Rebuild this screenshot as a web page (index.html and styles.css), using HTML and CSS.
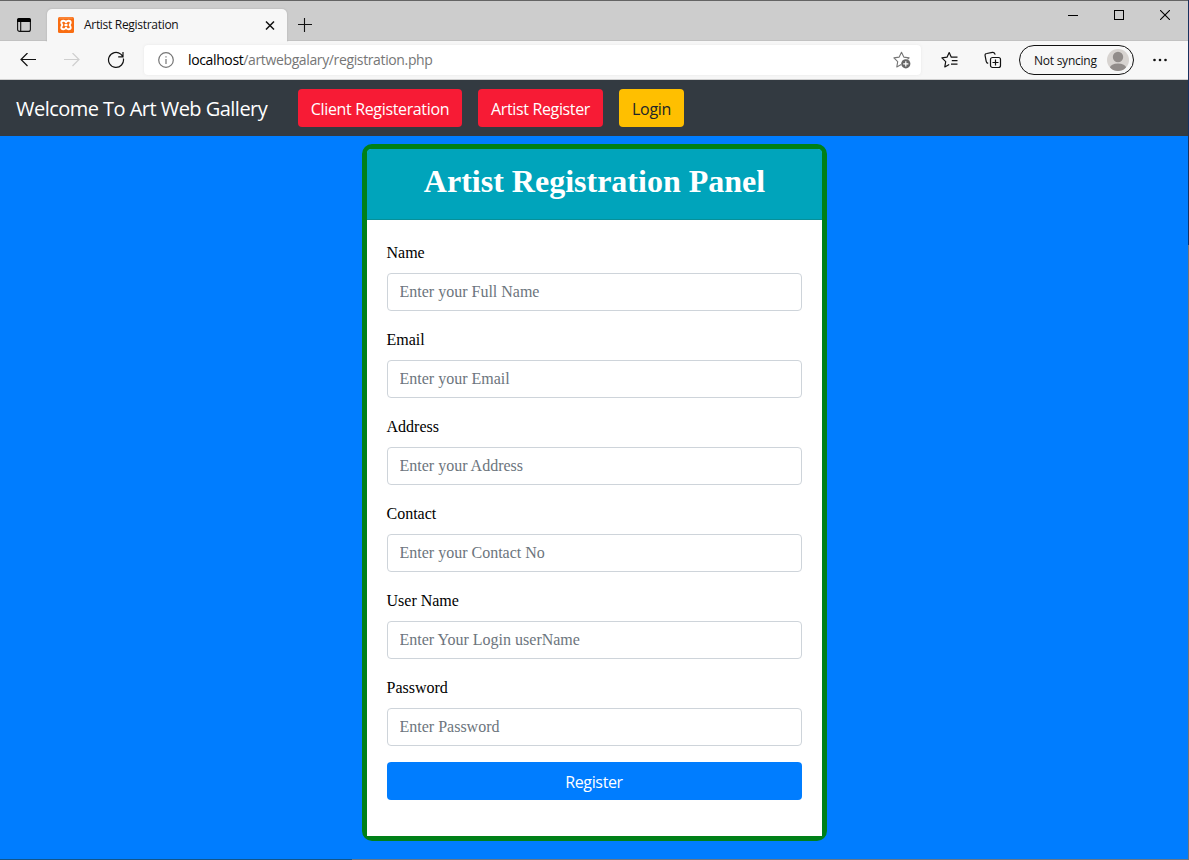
FILE: index.html
```html
<!DOCTYPE html>
<html lang="en">
<head>
<meta charset="utf-8">
<title>Artist Registration</title>
<link rel="stylesheet" href="styles.css">
</head>
<body>
<div class="screen">
<div class="window">
  <div class="tabstrip">
    <svg class="tab-actions" width="16" height="16" viewBox="0 0 16 16"><rect x="1.6" y="1.6" width="12.8" height="12.8" rx="2" fill="none" stroke="#111" stroke-width="1.1"/><path d="M1 5V3a2 2 0 0 1 2-2h10a2 2 0 0 1 2 2v2z" fill="#000"/><path d="M4.7 5v9.500" stroke="#111" stroke-width="1.1"/></svg>
    <div class="tab">
      <svg width="16" height="16" viewBox="0 0 16 16"><rect width="16" height="16" rx="1.500" fill="#f96d12"/><path d="M1.500 1h13" stroke="#fba66b" stroke-width=".8"/><path d="M8 5.500C7 3 3.300 3.300 3.300 5.500C3.300 7 4.300 7.300 4.300 8C4.300 8.700 3.300 9 3.300 10.500C3.300 12.700 7 13 8 10.500C9 13 12.700 12.700 12.700 10.500C12.700 9 11.700 8.700 11.700 8C11.700 7.300 12.700 7 12.700 5.500C12.700 3.300 9 3 8 5.500zM6.500 8h3" fill="none" stroke="#fff" stroke-width="1.900" stroke-linejoin="round"/></svg>
      <span class="tab-title">Artist Registration</span>
      <svg class="tab-close" width="10" height="10" viewBox="0 0 10 10"><path d="M1 1.500l8 8M9 1.500L1 9.500" stroke="#111" stroke-width="1.500"/></svg>
    </div>
    <svg class="new-tab" width="14" height="14" viewBox="0 0 14 14"><path d="M0 6.500h14M6.500 0v14" stroke="#111" stroke-width="1.100"/></svg>
    <div class="controls">
      <svg width="10" height="10" viewBox="0 0 10 10"><path d="M0 5.500h10" stroke="#000"/></svg>
      <svg width="10" height="10" viewBox="0 0 10 10"><rect x=".5" y=".5" width="9" height="9" fill="none" stroke="#000"/></svg>
      <svg width="10" height="10" viewBox="0 0 10 10"><path d="M0 0l10 10M10 0L0 10" stroke="#000" stroke-width="1.100"/></svg>
    </div>
  </div>
  <div class="toolbar">
    <svg class="back" width="16" height="14" viewBox="0 0 16 14"><path d="M16 6.500H1M7.500 0L1 6.500 7.500 13" fill="none" stroke="#111" stroke-width="1.200"/></svg>
    <svg class="forward" width="16" height="14" viewBox="0 0 16 14"><path d="M0 6.500h15M8.500 0L15 6.500 8.500 13" fill="none" stroke="#cfcfcf" stroke-width="1.200"/></svg>
    <svg class="reload" width="18" height="18" viewBox="0 0 18 18"><path d="M16.400 7.500A7.500 7.500 0 1 1 13.800 3.100L16 5.500M16 1v4.800h-4.800" fill="none" stroke="#111" stroke-width="1.200"/></svg>
    <div class="address">
      <svg width="16" height="16" viewBox="0 0 16 16"><circle cx="8" cy="8" r="7.300" fill="none" stroke="#767676" stroke-width="1.200"/><path d="M8 7v5M8 4.200v1.400" stroke="#767676" stroke-width="1.200"/></svg>
      <span class="url"><b>localhost</b>/artwebgalary/registration.php</span>
      <svg class="fav-add" width="18" height="18" viewBox="0 0 18 18"><path d="M8.200 13.500L3.800 15.900l.9-5.300L.9 6.900l5.300-.8L8.500 1.300l2.300 4.800 5.300.8-1.500 1.500" fill="none" stroke="#767676" stroke-width="1.100" stroke-linejoin="round"/><circle cx="12.800" cy="12.800" r="4.600" fill="#666"/><path d="M10.200 12.800h5.200M12.800 10.200v5.200" stroke="#fff" stroke-width="1.200"/></svg>
    </div>
    <svg class="favorites" width="18" height="18" viewBox="0 0 18 18"><path d="M16.500 6.200h-6.200L8.200 1.500 6 6.200.9 6.900l3.800 3.700-.9 5.300 4.400-2.500M10.800 9.600h5.700M10 13.200h6.500" fill="none" stroke="#111" stroke-width="1.200" stroke-linejoin="round"/></svg>
    <svg class="collections" width="18" height="18" viewBox="0 0 18 18"><path d="M4.200 12.400C2.800 12.100 2.400 11.400 2.200 10.300L1.100 4.700C.8 3.300 1.500 2.700 2.800 2.500L8.400 1.400c1.500-.3 2.300.2 2.800 2.300" fill="none" stroke="#111" stroke-width="1.200"/><rect x="6.500" y="6.500" width="10" height="10" rx="2" fill="#f7f7f7" stroke="#111" stroke-width="1.200"/><path d="M8.500 11.500h6M11.500 8.500v6" stroke="#111" stroke-width="1.200"/></svg>
    <div class="profile">
      <span>Not syncing</span>
      <svg width="22" height="22" viewBox="0 0 22 22"><defs><clipPath id="avatar"><circle cx="11" cy="11" r="11"/></clipPath></defs><g clip-path="url(#avatar)"><path d="M0 0h22v22H0z" fill="#d7d3d0"/><circle cx="11" cy="8" r="5.200" fill="#918c8a"/><ellipse cx="11" cy="18.500" rx="8" ry="4" fill="#918c8a"/></g></svg>
    </div>
    <svg class="menu" width="14" height="4" viewBox="0 0 14 4"><g fill="#111"><circle cx="1.500" cy="2" r="1.300"/><circle cx="7" cy="2" r="1.300"/><circle cx="12.500" cy="2" r="1.300"/></g></svg>
  </div>
  <nav class="navbar">
    <a class="brand">Welcome To Art Web Gallery</a>
    <a class="btn btn-danger client">Client Registeration</a>
    <a class="btn btn-danger artist">Artist Register</a>
    <a class="btn btn-warning login">Login</a>
  </nav>
  <main class="page">
    <form class="card">
      <div class="card-header"><h2>Artist Registration Panel</h2></div>
      <div class="card-body">
        <div class="group"><label>Name</label><input placeholder="Enter your Full Name"></div>
        <div class="group"><label>Email</label><input placeholder="Enter your Email"></div>
        <div class="group"><label>Address</label><input placeholder="Enter your Address"></div>
        <div class="group"><label>Contact</label><input placeholder="Enter your Contact No"></div>
        <div class="group"><label>User Name</label><input placeholder="Enter Your Login userName"></div>
        <div class="group"><label>Password</label><input type="password" placeholder="Enter Password"></div>
        <button type="button" class="btn btn-primary">Register</button>
      </div>
    </form>
  </main>
  <div class="bottom-edge"></div>
</div>
<div class="edge"></div>
</div>
</body>
</html>
```
FILE: styles.css
```css
* { box-sizing: border-box; }
body { margin: 0; font-family: "Open Sans", "Noto Sans", sans-serif; overflow: hidden; }
svg { display: block; flex: none; }
.screen { display: flex; width: 1189px; height: 860px; }
.window { display: flex; flex-direction: column; flex: 1; min-width: 0; }
.edge { width: 1px; background: linear-gradient(#17315f 245px, #77736f 245px); }
.bottom-edge { height: 1px; background: linear-gradient(90deg, #12558a 352px, #6b7785 352px); }

.tabstrip { display: flex; height: 41px; background: #cdcdcd; border-top: 1px solid #646464; box-shadow: inset 0 -1px #c2c2c2; }
.tab-actions { margin: 16px 0 0 16px; }
.tab { display: flex; align-items: center; width: 240px; height: 33px; margin: 8px 0 0 15px; padding: 0 12px 2px 11px; background: #f7f7f7; border-radius: 5px 5px 0 0; box-shadow: 0 0 2px #aaa; clip-path: inset(-3px -3px 0 -3px); }
.tab-title { flex: 1; margin-left: 10px; font-size: 12px; line-height: 16px; letter-spacing: -0.3px; white-space: nowrap; color: #111; }
.new-tab { margin: 17px 0 0 11px; }
.controls { display: flex; gap: 36px; margin: 9px 18px 0 auto; }

.toolbar { display: flex; align-items: center; height: 39px; background: #f7f7f7; border-bottom: 1px solid #cfcfcf; }
.back { margin-left: 20px; }
.forward { margin-left: 28px; }
.reload { margin-left: 27px; }
.address { display: flex; align-items: center; width: 777px; height: 30px; margin-left: 19px; padding: 0 10px 0 14px; background: #fff; border-radius: 4px; box-shadow: 0 0 3px #e6e6e6; }
.url { flex: 1; margin-left: 14px; font-size: 14px; line-height: 20px; letter-spacing: -0.37px; color: #767676; }
.url b { font-weight: 400; color: #000; }
.favorites { margin-left: 20px; }
.collections { margin-left: 25px; }
.profile { display: flex; align-items: center; justify-content: space-between; width: 115px; height: 30px; margin-left: 17px; padding: 0 4px 0 14px; border: 1px solid #111; border-radius: 15px; font-size: 12px; letter-spacing: -0.25px; white-space: nowrap; color: #111; }
.menu { margin-left: 19px; }

.navbar { display: flex; align-items: center; height: 56px; padding-left: 16px; background: #333a41; }
.brand { width: 282px; padding-top: 1px; color: #fff; font-size: 20px; letter-spacing: -0.53px; white-space: nowrap; }
.btn { display: flex; align-items: center; justify-content: center; height: 38px; margin-right: 16px; padding: 1px 0 0; border: 0; border-radius: 4px; font-family: inherit; font-size: 16px; letter-spacing: -0.35px; white-space: nowrap; color: #fff; }
.btn-danger { background: #f71b35; }
.btn-warning { background: #ffbf00; color: #212529; }
.btn-primary { width: 100%; margin: 0; background: #007dff; }
.client { width: 164px; }
.artist { width: 125px; }
.login { width: 65px; }

.page { display: flex; justify-content: center; align-items: flex-start; flex: 1; padding-top: 8px; background: #007dff; }
.card { display: flex; flex-direction: column; width: 465px; height: 697px; border: 5px solid #008018; border-radius: 10px; background: #fff; font-family: "Liberation Serif", serif; }
.card-header { height: 71px; padding: 13px 0 0 1px; background: #00a4bb; border-bottom: 1px solid #079099; border-radius: 4px 4px 0 0; }
.card-header h2 { margin: 0; font-size: 32px; line-height: 38px; text-align: center; color: #fff; }
.card-body { flex: 1; padding: 20px; background: #fff; }
.group { display: flex; flex-direction: column; gap: 8px; margin-bottom: 16px; }
.group label { height: 25px; font-size: 16px; line-height: 26px; color: #000; }
.group input { height: 38px; padding: 6px 12px; border: 1px solid #ced4da; border-radius: 4px; font-family: inherit; font-size: 16px; }
.group input::placeholder { color: #6c757d; opacity: 1; }
.card .btn { font-family: "Open Sans", "Noto Sans", sans-serif; }
```
